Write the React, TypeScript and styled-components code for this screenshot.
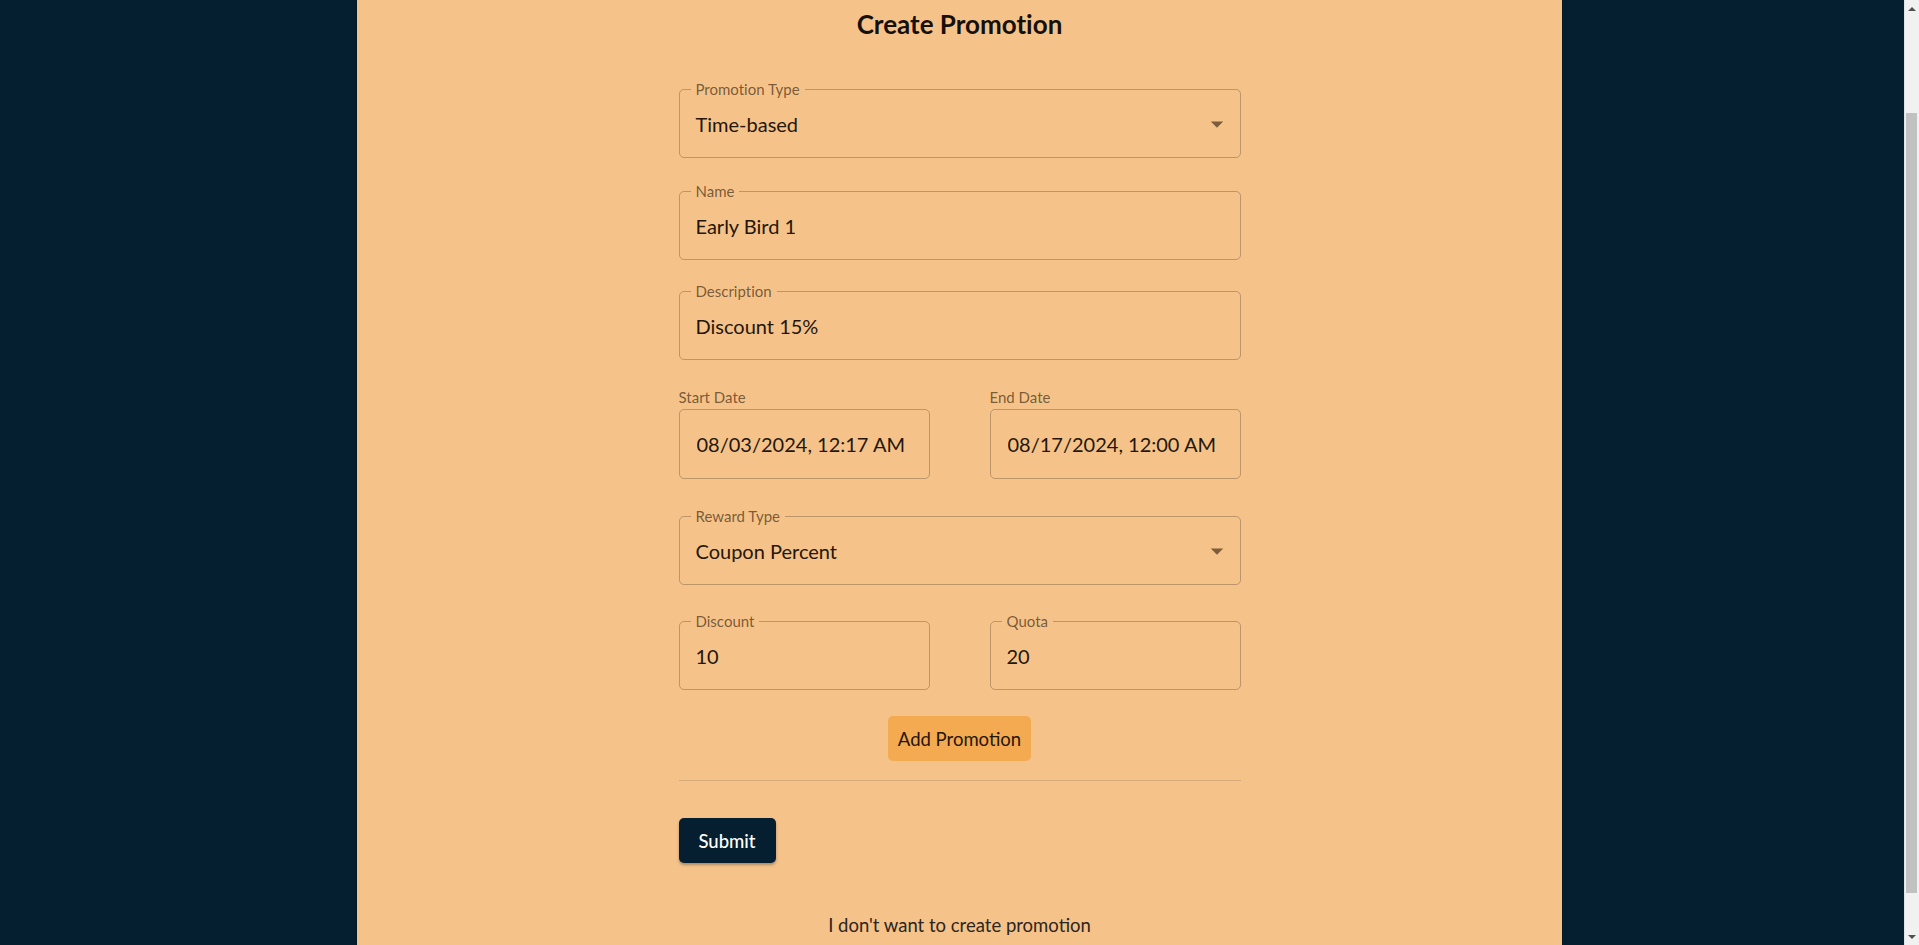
import React, { useLayoutEffect } from "react";
import styled, { createGlobalStyle } from "styled-components";

const Global = createGlobalStyle`
  html, body { margin: 0; padding: 0; }
  body {
    background: #061f30;
    font-family: Lato, "Noto Sans", "Liberation Sans", sans-serif;
    font-variant-ligatures: none;
  }
  * { box-sizing: border-box; }
`;

const Page = styled.div`
  display: grid;
  grid-template-columns: 357px 1205px 1fr;
  min-height: 100vh;
`;

const Panel = styled.main`
  grid-column: 2;
  background: #f5c38a;
  box-shadow: 0 0 3px rgba(0, 0, 0, 0.35);
  display: flex;
  flex-direction: column;
  align-items: center;
  padding: 125px 0 52px;
`;

const Title = styled.h1`
  margin: 0;
  font-size: 26px;
  line-height: 30px;
  font-weight: 700;
  color: #16100a;
`;

const Form = styled.form`
  width: 562px;
  display: flex;
  flex-direction: column;
  margin-top: 41px;
`;

const Block = styled.div<{ $mt?: number }>`
  margin-top: ${(p) => p.$mt ?? 0}px;
`;

const Row = styled.div<{ $mt?: number }>`
  display: grid;
  grid-template-columns: 251px 251px;
  justify-content: space-between;
  margin-top: ${(p) => p.$mt ?? 0}px;
`;

const Outlined = styled.fieldset`
  margin: 0;
  padding: 0 16px 7px;
  border: 1px solid rgba(0, 0, 0, 0.23);
  border-radius: 5px;
  min-width: 0;
  display: block;
`;

const Legend = styled.legend`
  font-size: 15px;
  line-height: 18px;
  color: rgba(40, 20, 0, 0.62);
  padding: 0 5px;
  margin-left: -5px;
`;

const ValueInput = styled.input`
  display: block;
  width: 100%;
  height: 52px;
  border: none;
  outline: none;
  background: transparent;
  padding: 0;
  font-family: inherit;
  font-variant-ligatures: none;
  font-size: 20px;
  color: #24160b;
`;

const SelectBox = styled.div`
  height: 52px;
  display: flex;
  align-items: center;
  justify-content: space-between;
  font-size: 20px;
  color: #24160b;
  cursor: pointer;
`;

const Caret = styled.svg`
  width: 30px;
  height: 30px;
  margin-right: -8px;
  fill: rgba(40, 20, 0, 0.58);
`;

const PlainLabel = styled.label`
  display: block;
  font-size: 15px;
  line-height: 18px;
  color: rgba(40, 20, 0, 0.62);
`;

const PlainBox = styled.div`
  margin-top: 3px;
  height: 70px;
  border: 1px solid rgba(0, 0, 0, 0.23);
  border-radius: 5px;
  padding: 0 17px;
  display: flex;
  align-items: center;
`;

const Center = styled.div<{ $mt?: number }>`
  display: flex;
  justify-content: center;
  margin-top: ${(p) => p.$mt ?? 0}px;
`;

const AddButton = styled.button`
  width: 143px;
  height: 45px;
  border: none;
  border-radius: 5px;
  background: #f4aa50;
  color: #24160b;
  font-family: inherit;
  font-size: 18.5px;
  cursor: pointer;
`;

const Divider = styled.hr<{ $mt?: number }>`
  margin: ${(p) => p.$mt ?? 0}px 0 0;
  border: none;
  border-top: 1px solid rgba(0, 0, 0, 0.12);
  width: 100%;
`;

const SubmitButton = styled.button<{ $mt?: number }>`
  align-self: flex-start;
  margin-top: ${(p) => p.$mt ?? 0}px;
  width: 97px;
  height: 45px;
  border: none;
  border-radius: 5px;
  background: #061f30;
  color: #ffffff;
  font-family: inherit;
  font-size: 18.5px;
  font-weight: 500;
  box-shadow: 0 2px 3px rgba(0, 0, 0, 0.3);
  cursor: pointer;
`;

const Cancel = styled.button<{ $mt?: number }>`
  align-self: center;
  margin-top: ${(p) => p.$mt ?? 0}px;
  background: none;
  border: none;
  padding: 0;
  font-family: inherit;
  font-size: 18.5px;
  line-height: 24px;
  color: #2c2520;
  cursor: pointer;
`;

/* window scrollbar as it appears in the captured page */
const ScrollBar = styled.div`
  position: fixed;
  top: 0;
  right: 0;
  width: 15px;
  height: 100vh;
  background: #f1f1f1;
  border-left: 1px solid #dfe3e8;
  display: flex;
  flex-direction: column;
  align-items: center;
`;

const ScrollArrow = styled.div<{ $down?: boolean }>`
  height: 17px;
  width: 100%;
  display: flex;
  align-items: center;
  justify-content: center;
  &::after {
    content: "";
    border-left: 4px solid transparent;
    border-right: 4px solid transparent;
    ${(p) =>
      p.$down ? "border-top: 4px solid #505050;" : "border-bottom: 4px solid #505050;"}
  }
`;

const ScrollTrack = styled.div`
  flex: 1;
  width: 100%;
  padding: 96px 2px 35px 1px;
  display: flex;
`;

const ScrollThumb = styled.div`
  flex: 1;
  background: #c1c1c1;
`;

const ArrowDown = () => (
  <Caret viewBox="0 0 24 24" aria-hidden>
    <path d="M7 10l5 5 5-5z" />
  </Caret>
);

function TextField({ label, value }: { label: string; value: string }) {
  return (
    <Outlined>
      <Legend>{label}</Legend>
      <ValueInput value={value} readOnly />
    </Outlined>
  );
}

function SelectField({ label, value }: { label: string; value: string }) {
  return (
    <Outlined>
      <Legend>{label}</Legend>
      <SelectBox role="button">
        <span>{value}</span>
        <ArrowDown />
      </SelectBox>
    </Outlined>
  );
}

function DateField({ label, value }: { label: string; value: string }) {
  return (
    <div>
      <PlainLabel>{label}</PlainLabel>
      <PlainBox>
        <ValueInput value={value} readOnly />
      </PlainBox>
    </div>
  );
}

export default function App() {
  useLayoutEffect(() => {
    window.scrollTo(0, 116);
  }, []);

  return (
    <>
      <Global />
      <Page>
        <Panel>
          <Title>Create Promotion</Title>
          <Form onSubmit={(e) => e.preventDefault()}>
            <Block>
              <SelectField label="Promotion Type" value="Time-based" />
            </Block>
            <Block $mt={24}>
              <TextField label="Name" value="Early Bird 1" />
            </Block>
            <Block $mt={22}>
              <TextField label="Description" value="Discount 15%" />
            </Block>
            <Row $mt={28}>
              <DateField label="Start Date" value="08/03/2024, 12:17 AM" />
              <DateField label="End Date" value="08/17/2024, 12:00 AM" />
            </Row>
            <Block $mt={28}>
              <SelectField label="Reward Type" value="Coupon Percent" />
            </Block>
            <Row $mt={27}>
              <TextField label="Discount" value="10" />
              <TextField label="Quota" value="20" />
            </Row>
            <Center $mt={26}>
              <AddButton type="button">Add Promotion</AddButton>
            </Center>
            <Divider $mt={19} />
            <SubmitButton type="submit" $mt={37}>
              Submit
            </SubmitButton>
            <Cancel type="button" $mt={50}>
              I don't want to create promotion
            </Cancel>
          </Form>
        </Panel>
      </Page>
      <ScrollBar aria-hidden>
        <ScrollArrow />
        <ScrollTrack>
          <ScrollThumb />
        </ScrollTrack>
        <ScrollArrow $down />
      </ScrollBar>
    </>
  );
}
